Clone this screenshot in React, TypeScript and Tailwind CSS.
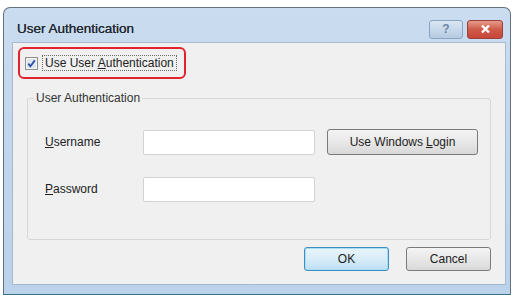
import React from 'react'

function CheckMark() {
  return (
    <svg width="13" height="13" viewBox="0 0 13 13" className="shrink-0">
      <rect x="0.5" y="0.5" width="12" height="12" fill="#f4f4f4" stroke="#8e8f8f" />
      <rect x="2" y="2" width="9" height="9" fill="#dfe6ee" />
      <path d="M3.2 6.6 L5.4 9.2 L9.8 3.4" fill="none" stroke="#2c52a8" strokeWidth="1.8" />
    </svg>
  )
}

export default function App() {
  return (
    <div className="w-[517px] h-[295px] bg-white pt-[7px] pl-[3px] font-['Liberation_Sans',Arial,sans-serif] text-[12px] text-[#222]">
      <div className="w-[508px] h-[288px] rounded-t-[7px] border border-[#65717e] border-b-[#2f7385] bg-gradient-to-b from-[#cadcf0] via-[#c0d6ec] to-[#bad2ea] flex flex-col">
        {/* title bar */}
        <div className="h-[34px] shrink-0 flex items-center pt-[8px] pl-[13px] pr-[7px]">
          <span className="text-[13.5px] text-[#23272e] [text-shadow:0_0_0.4px_#23272e]">User Authentication</span>
          <div className="flex-1" />
          <div className="flex items-center gap-[4px]">
            <div className="w-[34px] h-[19px] rounded-[3px] border border-[#8aa4c2] bg-gradient-to-b from-[#d9e6f3] to-[#b6cbe2] flex items-center justify-center text-[12px] font-bold text-[#6a86a6]">
              ?
            </div>
            <div className="w-[36px] h-[19px] rounded-[3px] border border-[#9a4038] bg-gradient-to-b from-[#e49a8c] via-[#cf5a48] to-[#c8453a] flex items-center justify-center">
              <svg width="11" height="10" viewBox="0 0 11 10">
                <path d="M2 1.5 L9 8.5 M9 1.5 L2 8.5" stroke="#fff" strokeWidth="2.4" />
              </svg>
            </div>
          </div>
        </div>

        {/* client area */}
        <div className="flex-1 ml-[8px] mr-[4px] mb-[9px] border border-[#a6b9cd] bg-[#f0f0f0] pt-[4px]">
          <div className="ml-[5px] w-[168px] h-[32px] border-2 border-[#e1232b] rounded-[6px] flex items-center pl-[5px]">
            <CheckMark />
            <span className="ml-[4px] px-[2px] leading-[14px] border border-dotted border-[#6a6a6a]">
              Use User <span className="underline">A</span>uthentication
            </span>
          </div>

          <div className="ml-[14px] w-[464px]">
            <fieldset className="mt-[12px] border border-[#d3d8dd] rounded-[3px] pb-[37px]">
              <legend className="ml-[6px] px-[2px] leading-[14px] text-[#333]">User Authentication</legend>
              <div className="ml-[17px] mt-[24px] h-[26px] flex items-center">
                <span className="w-[98px]">
                  <span className="underline">U</span>sername
                </span>
                <div className="w-[172px] h-[25px] bg-white border border-[#d0d4d9] rounded-[2px]" />
                <div className="ml-[12px] w-[151px] h-[26px] rounded-[3px] border border-[#7a7a7a] bg-gradient-to-b from-[#f4f4f4] via-[#e8e8e8] to-[#d8d8d8] flex items-center justify-center">
                  Use Windows <span className="underline ml-[3px]">L</span>ogin
                </div>
              </div>
              <div className="ml-[17px] mt-[21px] h-[26px] flex items-center">
                <span className="w-[98px]">
                  <span className="underline">P</span>assword
                </span>
                <div className="w-[172px] h-[25px] bg-white border border-[#d0d4d9] rounded-[2px]" />
              </div>
            </fieldset>

            <div className="mt-[7px] flex justify-end gap-[17px]">
              <div className="w-[85px] h-[24px] rounded-[3px] border border-[#3d8ec4] bg-gradient-to-b from-[#eaf5fc] via-[#d8ecf8] to-[#bedff4] flex items-center justify-center shadow-[inset_0_0_0_1px_#a9dcf5]">
                OK
              </div>
              <div className="w-[85px] h-[24px] rounded-[3px] border border-[#7a7a7a] bg-gradient-to-b from-[#f4f4f4] via-[#e8e8e8] to-[#d8d8d8] flex items-center justify-center">
                Cancel
              </div>
            </div>
          </div>
        </div>
      </div>
    </div>
  )
}
